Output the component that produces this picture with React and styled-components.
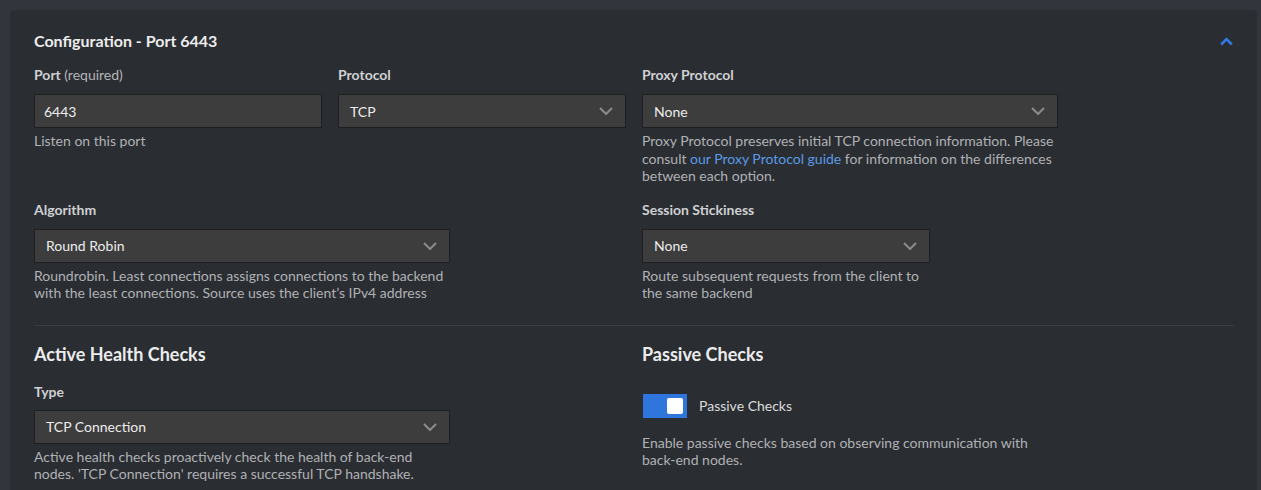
import React from "react";
import styled, { createGlobalStyle } from "styled-components";

const Global = createGlobalStyle`
  html, body { margin: 0; padding: 0; background: #32353b; }
  body { font-family: Lato, "Open Sans", "Liberation Sans", sans-serif; -webkit-font-smoothing: antialiased; }
  * { box-sizing: border-box; }
`;

const Page = styled.div`
  padding: 10px 4px 0 10px;
  height: 490px;
  overflow: hidden;
`;

const Card = styled.section`
  background: #2a2d32;
  border-radius: 4px 4px 0 0;
  padding: 20px 23px 40px 24px;
  min-height: 520px;
`;

const Header = styled.div`
  display: flex;
  align-items: center;
  justify-content: space-between;
  height: 22px;
  margin-bottom: 13px;
`;

const Title = styled.h2`
  margin: 0;
  font-size: 16px;
  font-weight: 700;
  color: #ececec;
  line-height: 22px;
`;

const Collapse = styled.button`
  background: none;
  border: 0;
  padding: 0;
  margin-right: 1px;
  display: flex;
  cursor: pointer;
`;

const Row = styled.div`
  display: flex;
  gap: 16px;
  margin-bottom: ${(p) => p.$mb || 0}px;
`;

const Half = styled.div`
  display: flex;
  gap: 16px;
  width: ${(p) => (p.$w ? `${p.$w}px` : "auto")};
  flex: ${(p) => (p.$w ? "none" : 1)};
`;

const Field = styled.div`
  width: ${(p) => p.$w}px;
  display: flex;
  flex-direction: column;
`;

const Label = styled.label`
  font-size: 14px;
  font-weight: 700;
  color: #cfd0d2;
  line-height: 20px;
  margin-bottom: ${(p) => p.$mb ?? 9}px;
`;

const Optional = styled.span`
  font-weight: 400;
  color: #b4b5b8;
`;

const Input = styled.input`
  height: 34px;
  width: 100%;
  background: #3d3d3d;
  border: 1px solid #1e1f21;
  color: #ececec;
  font-family: inherit;
  font-size: 14px;
  padding: 0 9px;
  outline: none;
`;

const SelectBox = styled.div`
  height: 34px;
  width: 100%;
  background: #3d3d3d;
  border: 1px solid #1e1f21;
  color: #ececec;
  font-size: 14px;
  padding: 0 12px 0 11px;
  display: flex;
  align-items: center;
  justify-content: space-between;
`;

const Help = styled.p`
  margin: 4px 0 0;
  font-size: 14px;
  line-height: 17.5px;
  color: #b0b1b4;
`;

const Link = styled.a`
  color: #5a9be6;
  text-decoration: none;
`;

const Divider = styled.hr`
  border: 0;
  border-top: 1px solid #393c42;
  margin: 23px 0 16px;
`;

const SectionTitle = styled.h3`
  margin: 0 0 16px;
  font-size: 18px;
  font-weight: 700;
  line-height: 24px;
  color: #ececec;
`;

const ToggleRow = styled.div`
  display: flex;
  align-items: center;
  gap: 12px;
  margin: 12px 0 12px 1px;
`;

const Toggle = styled.button`
  width: 44px;
  height: 24px;
  border: 0;
  padding: 0 4px 0 0;
  background: ${(p) => (p.$on ? "#2f76dc" : "#555")};
  display: flex;
  align-items: center;
  justify-content: ${(p) => (p.$on ? "flex-end" : "flex-start")};
  cursor: pointer;
`;

const Knob = styled.span`
  width: 16px;
  height: 16px;
  background: #fff;
  border-radius: 2px;
`;

const ToggleLabel = styled.span`
  font-size: 14px;
  color: #dcdcdc;
`;

const Chevron = () => (
  <svg width="14" height="8" viewBox="0 0 14 8" fill="none">
    <path d="M1 1l6 6 6-6" stroke="#8a8b8d" strokeWidth="2" />
  </svg>
);

const ChevronUp = () => (
  <svg width="13" height="9" viewBox="0 0 13 9" fill="none">
    <path d="M1.2 7.5L6.5 2.2l5.3 5.3" stroke="#2f7ae5" strokeWidth="2.6" />
  </svg>
);

const Select = ({ value }) => (
  <SelectBox>
    <span>{value}</span>
    <Chevron />
  </SelectBox>
);

export default function App() {
  return (
    <>
      <Global />
      <Page>
        <Card>
          <Header>
            <Title>Configuration - Port 6443</Title>
            <Collapse aria-label="collapse">
              <ChevronUp />
            </Collapse>
          </Header>

          <Row $mb={15}>
            <Half $w={592}>
              <Field $w={288}>
                <Label>
                  Port <Optional>(required)</Optional>
                </Label>
                <Input defaultValue="6443" />
                <Help>Listen on this port</Help>
              </Field>
              <Field $w={288}>
                <Label>Protocol</Label>
                <Select value="TCP" />
              </Field>
            </Half>
            <Half>
              <Field $w={416}>
                <Label>Proxy Protocol</Label>
                <Select value="None" />
                <Help>
                  Proxy Protocol preserves initial TCP connection information. Please
                  consult <Link href="#">our Proxy Protocol guide</Link> for information
                  on the differences between each option.
                </Help>
              </Field>
            </Half>
          </Row>

          <Row>
            <Half $w={592}>
              <Field $w={416}>
                <Label>Algorithm</Label>
                <Select value="Round Robin" />
                <Help>
                  Roundrobin. Least connections assigns connections to the backend
                  with the least connections. Source uses the client’s IPv4 address
                </Help>
              </Field>
            </Half>
            <Half>
              <Field $w={288}>
                <Label>Session Stickiness</Label>
                <Select value="None" />
                <Help>Route subsequent requests from the client to the same backend</Help>
              </Field>
            </Half>
          </Row>

          <Divider />

          <Row>
            <Half $w={592}>
              <Field $w={416}>
                <SectionTitle>Active Health Checks</SectionTitle>
                <Label $mb={8}>Type</Label>
                <Select value="TCP Connection" />
                <Help>
                  Active health checks proactively check the health of back-end
                  nodes. 'TCP Connection' requires a successful TCP handshake.
                </Help>
              </Field>
            </Half>
            <Half>
              <Field $w={416}>
                <SectionTitle>Passive Checks</SectionTitle>
                <ToggleRow>
                  <Toggle $on aria-label="Passive Checks">
                    <Knob />
                  </Toggle>
                  <ToggleLabel>Passive Checks</ToggleLabel>
                </ToggleRow>
                <Help>
                  Enable passive checks based on observing communication with
                  back-end nodes.
                </Help>
              </Field>
            </Half>
          </Row>
        </Card>
      </Page>
    </>
  );
}
